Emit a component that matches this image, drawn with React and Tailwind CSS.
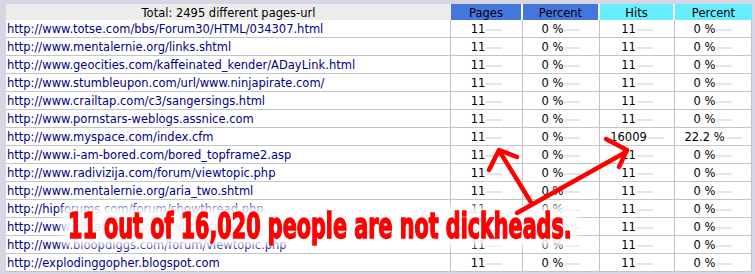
import React from 'react';

const rows = [
  { url: 'http://www.totse.com/bbs/Forum30/HTML/034307.html', pages: '11', pp: '0 %', hits: '11', hp: '0 %' },
  { url: 'http://www.mentalernie.org/links.shtml', pages: '11', pp: '0 %', hits: '11', hp: '0 %' },
  { url: 'http://www.geocities.com/kaffeinated_kender/ADayLink.html', pages: '11', pp: '0 %', hits: '11', hp: '0 %' },
  { url: 'http://www.stumbleupon.com/url/www.ninjapirate.com/', pages: '11', pp: '0 %', hits: '11', hp: '0 %' },
  { url: 'http://www.crailtap.com/c3/sangersings.html', pages: '11', pp: '0 %', hits: '11', hp: '0 %' },
  { url: 'http://www.pornstars-weblogs.assnice.com', pages: '11', pp: '0 %', hits: '11', hp: '0 %' },
  { url: 'http://www.myspace.com/index.cfm', pages: '11', pp: '0 %', hits: '16009', hp: '22.2 %' },
  { url: 'http://www.i-am-bored.com/bored_topframe2.asp', pages: '11', pp: '0 %', hits: '11', hp: '0 %' },
  { url: 'http://www.radivizija.com/forum/viewtopic.php', pages: '11', pp: '0 %', hits: '11', hp: '0 %' },
  { url: 'http://www.mentalernie.org/aria_two.shtml', pages: '11', pp: '0 %', hits: '11', hp: '0 %' },
  { url: 'http://hipforums.com/forum/showthread.php', pages: '11', pp: '0 %', hits: '11', hp: '0 %' },
  { url: 'http://www.ninjapirate.com/index.html', pages: '11', pp: '0 %', hits: '11', hp: '0 %' },
  { url: 'http://www.bloopdiggs.com/forum/viewtopic.php', pages: '11', pp: '0 %', hits: '11', hp: '0 %' },
  { url: 'http://explodinggopher.blogspot.com', pages: '11', pp: '0 %', hits: '11', hp: '0 %' },
];

// number with the faint bar trailing it
const Num = ({ children }) => (
  <div className="relative flex h-full items-center justify-center border-r border-b border-[#c4c4c8] pt-[3px] text-black">
    <span>{children}</span>
    <span className="ml-[1px] h-[2px] w-[16px] bg-[#e6e6e6]" />
  </div>
);

const App = () => {
  return (
    <div
      className="relative h-[274px] w-[755px] overflow-hidden bg-[#d6d6e4] pt-[4px] pl-[6px] pr-[3px] text-[11.5px] leading-none"
      style={{ fontFamily: '"DejaVu Sans", Verdana, sans-serif' }}
    >
      <div className="grid grid-cols-[445px_72px_77px_75px_77px] grid-rows-[16px] auto-rows-[18px] bg-white">
        <div className="flex items-center justify-center bg-[#ececec] pt-[3px] text-black">Total: 2495 different pages-url</div>
        <div className="flex items-center justify-center border-r-2 border-white bg-[#4477dd] pt-[3px] text-black">Pages</div>
        <div className="flex items-center justify-center border-r-2 border-white bg-[#4477dd] pt-[3px] text-black">Percent</div>
        <div className="flex items-center justify-center border-r-2 border-white bg-[#66eeff] pt-[3px] text-black">Hits</div>
        <div className="flex items-center justify-center bg-[#66eeff] pt-[3px] text-black">Percent</div>

        {rows.map((r, i) => (
          <React.Fragment key={i}>
            <div className="flex items-center border-r border-b border-[#c4c4c8] pt-[3px] pl-[1px] text-[#000088]">{r.url}</div>
            <Num>{r.pages}</Num>
            <Num>{r.pp}</Num>
            <Num>{r.hits}</Num>
            <Num>{r.hp}</Num>
          </React.Fragment>
        ))}
      </div>

      {/* white wash behind the caption */}
      <div className="pointer-events-none absolute left-[62px] top-[206px] h-[40px] w-[516px] bg-white/90 blur-[3px]" />
      <div
        className="pointer-events-none absolute left-[68px] top-[208px] origin-left scale-x-[0.64] whitespace-nowrap text-[36px] font-bold leading-none text-[#ff0000] [-webkit-text-stroke:1.5px_#ff0000] [text-shadow:0_0_2px_#fff,0_0_4px_#fff]"
        style={{ fontFamily: '"DejaVu Sans Condensed", "DejaVu Sans", sans-serif' }}
      >
        11 out of 16,020 people are not dickheads.
      </div>
      <svg className="pointer-events-none absolute left-0 top-0" width="755" height="274" viewBox="0 0 755 274">
        <g fill="none" stroke="#ff0000" strokeWidth="4.5" strokeLinecap="round" strokeLinejoin="round">
          <line x1="532" y1="204" x2="500" y2="152" />
          <polyline points="489,170 499,150 517,157" />
          <line x1="517" y1="213" x2="626" y2="152" />
          <polyline points="606,139 627,150 619,167" />
        </g>
      </svg>
    </div>
  );
};

export default App;
